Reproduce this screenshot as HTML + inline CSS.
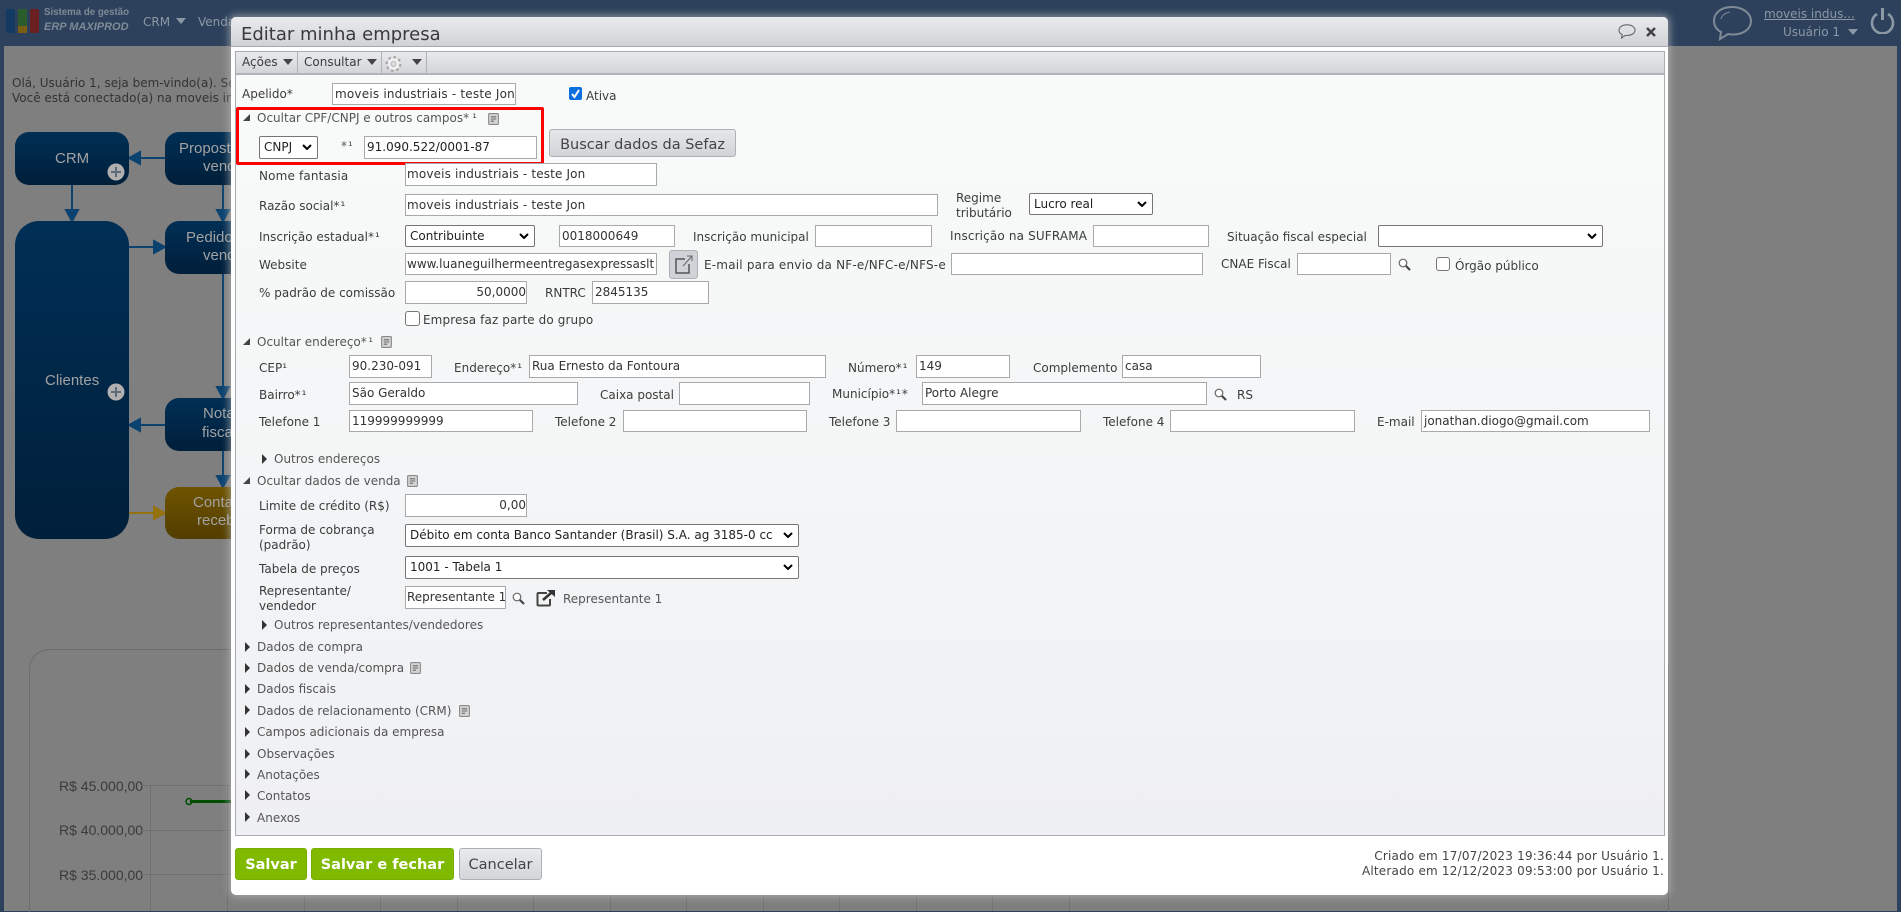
<!DOCTYPE html>
<html lang="pt-BR"><head><meta charset="utf-8"><title>Editar minha empresa</title>
<style>
html,body{margin:0;padding:0;width:1901px;height:912px;overflow:hidden;background:#2d415c}
*{box-sizing:border-box}
body{position:relative;font-family:"DejaVu Sans","Liberation Sans",sans-serif;font-size:12px;color:#3c3c3c}
div,svg{position:absolute}
.t{white-space:nowrap;line-height:16px;height:16px}
.i{background:#fff;border:1px solid #a9a9a9;white-space:nowrap;overflow:hidden;padding-left:2px;color:#333;line-height:20px}
.s{background:#fff;border:1px solid #767676;border-radius:2px;white-space:nowrap;overflow:hidden;padding-left:4px;color:#222;line-height:20px}
.s svg{right:5px;top:7px}
.cb{background:#fff;border:1px solid #767676;border-radius:3px}
.to{width:7px;height:7px;background:#444;clip-path:polygon(100% 0,100% 100%,0 100%)}
.tc{width:5px;height:10px;background:#333;clip-path:polygon(0 0,100% 50%,0 100%)}
.dn{width:0;height:0;border-left:5px solid transparent;border-right:5px solid transparent;border-top:6px solid #444}
.bx{border-radius:14px;background:linear-gradient(#002f55,#001f3a)}
.f{font-family:"Liberation Sans",sans-serif;font-size:15px;color:#a2a2a2;white-space:nowrap;line-height:18px}
.y{font-family:"Liberation Sans",sans-serif;font-size:14px;color:#3a3a3a;white-space:nowrap;line-height:16px}
.btn{border-radius:3px;text-align:center;font-size:14.5px;line-height:32px}
.g{background:#7fb900;color:#fff;font-weight:bold;border:1px solid #76ad00}
.u{letter-spacing:1px}
.w{letter-spacing:.15px}
</style></head><body>
<svg width="0" height="0" style="position:absolute"><defs>
<symbol id="doc" viewBox="0 0 10 11"><rect x=".5" y=".5" width="9" height="10" rx="1" fill="#d4d4d4" stroke="#8a8a8a"/><path d="M2.5 3.5h5M2.5 5.5h5M2.5 7.5h3" stroke="#6a6a6a" fill="none"/></symbol>
<symbol id="sr" viewBox="0 0 13 13"><circle cx="5" cy="5" r="3.8" fill="#fff" stroke="#666" stroke-width="1.2"/><path d="M8 8l4 4" stroke="#444" stroke-width="2.2"/></symbol>
<symbol id="ch" viewBox="0 0 10 6"><path d="M1 1l4 4 4-4" stroke="#000" stroke-width="2" fill="none"/></symbol>
</defs></svg>

<!-- page background -->
<div style="left:4px;top:46px;width:1893px;height:865px;background:#7f7f7f"></div>

<!-- header -->
<div style="left:6px;top:9px;width:9px;height:24px;background:#123a63;border-radius:2px"></div>
<div style="left:18px;top:9px;width:9px;height:17px;background:#2a5c2e"></div>
<div style="left:18px;top:26px;width:9px;height:7px;background:#7a5f12"></div>
<div style="left:30px;top:9px;width:9px;height:24px;background:#6a2020;border-radius:2px"></div>
<div class="t" style="left:44px;top:6px;font:bold 9.7px/14px 'Liberation Sans',sans-serif;color:#7e8a97">Sistema de gestão</div>
<div class="t" style="left:44px;top:19px;font:italic bold 11px/16px 'Liberation Sans',sans-serif;color:#7e8a97">ERP MAXIPROD</div>
<div class="t" style="left:143px;top:14px;color:#8c98a5">CRM</div>
<div class="dn" style="left:176px;top:18px;border-top-color:#8c98a5"></div>
<div class="t" style="left:198px;top:14px;color:#8c98a5">Vendas</div>
<svg style="left:1712px;top:5px" width="41" height="36" viewBox="0 0 41 36"><path d="M20 2C9 2 2 8 2 16c0 5 3 9 7 11l-1 7 8-5c2 .4 3 .5 5 .5 11 0 18-6 18-13.500S31 2 20 2z" fill="none" stroke="#7f8a96" stroke-width="2"/><path d="M9 14c1-4 4-6 9-7" fill="none" stroke="#7f8a96"/></svg>
<div class="t" style="left:1764px;top:6px;color:#8c98a5;text-decoration:underline">moveis indus...</div>
<div class="t" style="left:1783px;top:24px;color:#8c98a5">Usuário 1</div>
<div class="dn" style="left:1848px;top:29px;border-top-color:#8c98a5"></div>
<svg style="left:1870px;top:8px" width="25" height="26" viewBox="0 0 25 26"><path d="M7 6a10.500 10.500 0 1 0 11 0" fill="none" stroke="#8c98a5" stroke-width="2.600"/><path d="M12.500 0v12" stroke="#8c98a5" stroke-width="3"/></svg>

<!-- background content -->
<div class="t" style="left:12px;top:75px;color:#333">Olá, Usuário 1, seja bem-vindo(a). Seu</div>
<div class="t" style="left:12px;top:90px;color:#333">Você está conectado(a) na moveis industriais</div>

<svg style="left:0;top:0" width="240" height="560">
<g stroke="#0b4270" stroke-width="2" fill="#0b4270">
<path d="M165 158H140"/><path d="M129 158l11-6v12z"/>
<path d="M72 185V210"/><path d="M72 221l-6-11h12z"/>
<path d="M129 247H155"/><path d="M165 247l-11-6v12z"/>
<path d="M223 185V210"/><path d="M223 221l-6-11h12z"/>
<path d="M223 274V388"/><path d="M223 398l-6-11h12z"/>
<path d="M165 425H140"/><path d="M129 425l11-6v12z"/>
<path d="M223 451V477"/><path d="M223 487l-6-11h12z"/>
</g>
<g stroke="#96720e" stroke-width="2" fill="#96720e"><path d="M129 513H155"/><path d="M165 513l-11-6v12z"/></g>
</svg>
<div class="bx" style="left:15px;top:132px;width:114px;height:53px"></div>
<div class="f" style="left:55px;top:150px">CRM</div>
<div class="bx" style="left:165px;top:132px;width:80px;height:53px"></div>
<div class="f" style="left:179px;top:140px">Proposta</div>
<div class="f" style="left:203px;top:158px">vendas</div>
<div class="bx" style="left:15px;top:221px;width:114px;height:318px;border-radius:24px"></div>
<div class="f" style="left:45px;top:372px">Clientes</div>
<div class="bx" style="left:165px;top:221px;width:80px;height:53px"></div>
<div class="f" style="left:186px;top:229px">Pedido</div>
<div class="f" style="left:203px;top:247px">vendas</div>
<div class="bx" style="left:165px;top:398px;width:80px;height:53px"></div>
<div class="f" style="left:203px;top:405px">Notas</div>
<div class="f" style="left:202px;top:424px">fiscais</div>
<div class="bx" style="left:165px;top:487px;width:80px;height:52px;background:linear-gradient(#6f5400,#523d00)"></div>
<div class="f" style="left:193px;top:494px">Contas</div>
<div class="f" style="left:197px;top:512px">receber</div>
<svg style="left:107px;top:163px" width="18" height="18"><circle cx="9" cy="9" r="8.500" fill="#b0b0b0"/><path d="M9 4v10M4 9h10" stroke="#5c6a78" stroke-width="2"/></svg>
<svg style="left:107px;top:383px" width="18" height="18"><circle cx="9" cy="9" r="8.500" fill="#b0b0b0"/><path d="M9 4v10M4 9h10" stroke="#5c6a78" stroke-width="2"/></svg>

<!-- chart -->
<div style="left:29px;top:649px;width:1640px;height:300px;border:1px solid #6c6c6c;border-radius:20px"></div>
<div class="y" style="left:59px;top:778px">R$ 45.000,00</div>
<div class="y" style="left:59px;top:822px">R$ 40.000,00</div>
<div class="y" style="left:59px;top:867px">R$ 35.000,00</div>
<svg style="left:0;top:770px" width="1100" height="141">
<g stroke="#707070"><path d="M140 15.500H235M140 60.500H235M140 104.500H235"/><path d="M150.500 15V141M227.500 15V141M304.500 120V141M380.500 120V141M457.500 120V141M533.500 120V141M610.500 120V141M686.500 120V141M763.500 120V141M839.500 120V141M916.500 120V141M992.500 120V141M1069.500 120V141"/></g>
<path d="M190 31.500H235" stroke="#004d00" stroke-width="3"/><circle cx="189" cy="31.500" r="3" fill="none" stroke="#004d00" stroke-width="1.500"/>
</svg>

<!-- modal -->
<div style="left:231px;top:17px;width:1437px;height:878px;background:#fff;border-radius:5px;box-shadow:0 0 8px 2px rgba(190,190,190,.6)"></div>
<div style="left:231px;top:17px;width:1437px;height:30px;background:linear-gradient(#eaebed,#d0d2d5);border-radius:5px 5px 0 0;border-bottom:1px solid #a6aaaf"></div>
<div class="t" style="left:241px;top:23px;font-size:18px;line-height:24px;height:24px;color:#3a3a3a">Editar minha empresa</div>
<svg style="left:1618px;top:24px" width="18" height="15" viewBox="0 0 18 15"><path d="M9 .8C4.500.8 1 3 1 6.200c0 2 1.300 3.500 3.200 4.400L3.500 14l3.800-2.600c.6.100 1.100.100 1.700.100 4.500 0 8-2.200 8-5.300S13.500.8 9 .8z" fill="none" stroke="#666" stroke-width="1.100"/></svg>
<svg style="left:1646px;top:27px" width="10" height="10"><path d="M1 1l8 8M9 1l-8 8" stroke="#444" stroke-width="2.500"/></svg>

<!-- panel -->
<div style="left:235px;top:51px;width:1430px;height:785px;background:linear-gradient(#f9fbfa,#eff0f3);border:1px solid #a8acb2"></div>
<div style="left:236px;top:52px;width:1428px;height:23px;background:linear-gradient(#e9eaec,#d3d5d8);border-bottom:2px solid #b0b4ba"></div>
<div class="t" style="left:242px;top:54px">Ações</div><div class="dn" style="left:283px;top:59px"></div>
<div style="left:297px;top:52px;width:1px;height:21px;background:#aeb2b7"></div>
<div class="t" style="left:304px;top:54px">Consultar</div><div class="dn" style="left:367px;top:59px"></div>
<div style="left:381px;top:52px;width:1px;height:21px;background:#aeb2b7"></div>
<svg style="left:385px;top:55px" width="17" height="18" viewBox="0 0 17 18"><circle cx="8.500" cy="9" r="6.800" fill="none" stroke="#a8a8a8" stroke-width="2.400" stroke-dasharray="2.600 2.700"/><circle cx="8.500" cy="9" r="4.300" fill="none" stroke="#f2f2f2" stroke-width="2.600"/><circle cx="8.500" cy="9" r="2.500" fill="none" stroke="#b5b5b5"/></svg>
<div class="dn" style="left:412px;top:59px"></div>
<div style="left:426px;top:52px;width:1px;height:21px;background:#aeb2b7"></div>

<div class="t" style="left:242px;top:86px">Apelido*</div>
<div class="i" style="left:332px;top:83px;width:184px;height:22px;letter-spacing:.2px">moveis industriais - teste Jon</div>
<svg style="left:569px;top:87px" width="13" height="13"><rect width="13" height="13" rx="2" fill="#0b6fe0"/><path d="M3 7l2.500 3L10 3" stroke="#fff" stroke-width="2" fill="none"/></svg>
<div class="t" style="left:586px;top:88px">Ativa</div>

<div style="left:236px;top:107px;width:308px;height:58px;border:3.500px solid #f00;border-radius:2px"></div>
<div class="to" style="left:243px;top:114px"></div>
<div class="t" style="left:257px;top:110px;color:#555">Ocultar CPF/CNPJ e outros campos<span class="u" style="letter-spacing:3px">*¹</span></div>
<svg style="left:488px;top:113px" width="11" height="12"><use href="#doc"/></svg>
<div class="s" style="left:259px;top:136px;width:59px;height:23px">CNPJ<svg width="10" height="6"><use href="#ch"/></svg></div>
<div class="t" style="left:341px;top:138px;color:#555"><span class="u">*¹</span></div>
<div class="i" style="left:364px;top:136px;width:173px;height:23px;color:#222;line-height:20px">91.090.522/0001-87</div>
<div class="btn" style="left:549px;top:129px;width:187px;height:28px;background:linear-gradient(#e6e7e9,#d2d4d7);border:1px solid #aeb1b5;line-height:31px;color:#444">Buscar dados da Sefaz</div>

<div class="t w" style="left:259px;top:168px">Nome fantasia</div>
<div class="i w" style="left:405px;top:163px;width:252px;height:23px;padding-left:1px">moveis industriais - teste Jon</div>
<div class="t" style="left:259px;top:198px">Razão social<span class="u">*¹</span></div>
<div class="i w" style="left:405px;top:194px;width:533px;height:22px;padding-left:1px">moveis industriais - teste Jon</div>
<div class="t" style="left:956px;top:190px">Regime</div>
<div class="t" style="left:956px;top:205px">tributário</div>
<div class="s" style="left:1029px;top:193px;width:124px;height:22px">Lucro real<svg width="10" height="6"><use href="#ch"/></svg></div>

<div class="t" style="left:259px;top:229px">Inscrição estadual<span class="u">*¹</span></div>
<div class="s" style="left:405px;top:225px;width:130px;height:22px">Contribuinte<svg width="10" height="6"><use href="#ch"/></svg></div>
<div class="i" style="left:559px;top:225px;width:116px;height:22px">0018000649</div>
<div class="t" style="left:693px;top:229px">Inscrição municipal</div>
<div class="i" style="left:815px;top:225px;width:117px;height:22px"></div>
<div class="t w" style="left:950px;top:228px">Inscrição na SUFRAMA</div>
<div class="i" style="left:1093px;top:225px;width:116px;height:22px"></div>
<div class="t" style="left:1227px;top:229px">Situação fiscal especial</div>
<div class="s" style="left:1378px;top:225px;width:225px;height:22px"><svg width="10" height="6"><use href="#ch"/></svg></div>

<div class="t" style="left:259px;top:257px">Website</div>
<div class="i" style="left:405px;top:253px;width:252px;height:22px;padding-left:1px">www.luaneguilhermeentregasexpressaslt</div>
<div style="left:669px;top:250px;width:29px;height:29px;background:#cfd2d6;border:1px solid #aeb1b5;border-radius:3px"></div>
<svg style="left:674px;top:255px" width="20" height="20" viewBox="0 0 20 20"><path d="M11 4H2v14h13V9" fill="none" stroke="#555" stroke-width="1.500"/><path d="M9 11L18 1M13 1h5v5" fill="none" stroke="#666"/></svg>
<div class="t" style="left:704px;top:257px;letter-spacing:.2px">E-mail para envio da NF-e/NFC-e/NFS-e</div>
<div class="i" style="left:951px;top:253px;width:252px;height:22px"></div>
<div class="t" style="left:1221px;top:256px">CNAE Fiscal</div>
<div class="i" style="left:1297px;top:253px;width:94px;height:22px"></div>
<svg style="left:1398px;top:258px" width="13" height="13"><use href="#sr"/></svg>
<div class="cb" style="left:1436px;top:257px;width:14px;height:14px"></div>
<div class="t" style="left:1455px;top:258px">Órgão público</div>

<div class="t" style="left:259px;top:285px">% padrão de comissão</div>
<div class="i" style="left:405px;top:281px;width:122px;height:23px;text-align:right;padding:0">50,0000</div>
<div class="t" style="left:545px;top:285px">RNTRC</div>
<div class="i" style="left:592px;top:281px;width:117px;height:23px">2845135</div>
<div class="cb" style="left:405px;top:311px;width:15px;height:15px"></div>
<div class="t" style="left:423px;top:312px;letter-spacing:.1px">Empresa faz parte do grupo</div>

<div class="to" style="left:243px;top:338px"></div>
<div class="t" style="left:257px;top:334px;color:#555">Ocultar endereço<span class="u" style="letter-spacing:1.5px">*¹</span></div>
<svg style="left:381px;top:336px" width="11" height="12"><use href="#doc"/></svg>

<div class="t" style="left:259px;top:360px">CEP¹</div>
<div class="i" style="left:349px;top:355px;width:83px;height:23px">90.230-091</div>
<div class="t" style="left:454px;top:360px">Endereço<span class="u">*¹</span></div>
<div class="i" style="left:529px;top:355px;width:297px;height:23px">Rua Ernesto da Fontoura</div>
<div class="t" style="left:848px;top:360px">Número<span class="u">*¹</span></div>
<div class="i" style="left:916px;top:355px;width:94px;height:23px">149</div>
<div class="t" style="left:1033px;top:360px">Complemento</div>
<div class="i" style="left:1122px;top:355px;width:139px;height:23px">casa</div>

<div class="t" style="left:259px;top:387px">Bairro<span class="u">*¹</span></div>
<div class="i" style="left:349px;top:382px;width:229px;height:23px">São Geraldo</div>
<div class="t" style="left:600px;top:387px">Caixa postal</div>
<div class="i" style="left:679px;top:382px;width:131px;height:23px"></div>
<div class="t" style="left:832px;top:386px">Município<span class="u">*¹*</span></div>
<div class="i" style="left:922px;top:382px;width:285px;height:23px">Porto Alegre</div>
<svg style="left:1214px;top:388px" width="13" height="13"><use href="#sr"/></svg>
<div class="t" style="left:1237px;top:387px">RS</div>

<div class="t" style="left:259px;top:414px">Telefone 1</div>
<div class="i" style="left:349px;top:410px;width:184px;height:22px">119999999999</div>
<div class="t" style="left:555px;top:414px">Telefone 2</div>
<div class="i" style="left:623px;top:410px;width:184px;height:22px"></div>
<div class="t" style="left:829px;top:414px">Telefone 3</div>
<div class="i" style="left:896px;top:410px;width:185px;height:22px"></div>
<div class="t" style="left:1103px;top:414px">Telefone 4</div>
<div class="i" style="left:1170px;top:410px;width:185px;height:22px"></div>
<div class="t" style="left:1377px;top:414px">E-mail</div>
<div class="i" style="left:1421px;top:410px;width:229px;height:22px">jonathan.diogo@gmail.com</div>

<div class="tc" style="left:262px;top:454px"></div>
<div class="t" style="left:274px;top:451px;color:#555">Outros endereços</div>
<div class="to" style="left:243px;top:477px"></div>
<div class="t" style="left:257px;top:473px;color:#555">Ocultar dados de venda</div>
<svg style="left:407px;top:475px" width="11" height="12"><use href="#doc"/></svg>

<div class="t" style="left:259px;top:498px">Limite de crédito (R$)</div>
<div class="i" style="left:405px;top:494px;width:122px;height:23px;text-align:right;padding:0">0,00</div>
<div class="t" style="left:259px;top:522px">Forma de cobrança</div>
<div class="t" style="left:259px;top:537px">(padrão)</div>
<div class="s" style="left:405px;top:524px;width:394px;height:23px;line-height:21px"><span style="display:block;width:362px;overflow:hidden">Débito em conta Banco Santander (Brasil) S.A. ag 3185-0 cc 1234</span><svg width="10" height="6"><use href="#ch"/></svg></div>
<div class="t" style="left:259px;top:561px">Tabela de preços</div>
<div class="s" style="left:405px;top:556px;width:394px;height:23px;line-height:21px">1001 - Tabela 1<svg width="10" height="6"><use href="#ch"/></svg></div>
<div class="t" style="left:259px;top:583px">Representante/</div>
<div class="t" style="left:259px;top:598px">vendedor</div>
<div class="i" style="left:405px;top:586px;width:101px;height:23px;line-height:20px;padding-left:1px">Representante 1</div>
<svg style="left:512px;top:592px" width="13" height="13"><use href="#sr"/></svg>
<svg style="left:536px;top:590px" width="19" height="17" viewBox="0 0 19 17"><path d="M11 3H2.500a1 1 0 0 0-1 1v10.500a1 1 0 0 0 1 1H13a1 1 0 0 0 1-1V9" fill="none" stroke="#444" stroke-width="2"/><path d="M7 10L15 3" stroke="#333" stroke-width="2.500"/><path d="M11 0h8v7z" fill="#333"/></svg>
<div class="t" style="left:563px;top:591px;color:#555">Representante 1</div>
<div class="tc" style="left:262px;top:620px"></div>
<div class="t" style="left:274px;top:617px;color:#555">Outros representantes/vendedores</div>

<div class="tc" style="left:245px;top:642px"></div><div class="t" style="left:257px;top:639px;color:#555">Dados de compra</div>
<div class="tc" style="left:245px;top:663px"></div><div class="t" style="left:257px;top:660px;color:#555">Dados de venda/compra</div>
<svg style="left:410px;top:662px" width="11" height="12"><use href="#doc"/></svg>
<div class="tc" style="left:245px;top:684px"></div><div class="t" style="left:257px;top:681px;color:#555">Dados fiscais</div>
<div class="tc" style="left:245px;top:705px"></div><div class="t" style="left:257px;top:703px;color:#555">Dados de relacionamento (CRM)</div>
<svg style="left:459px;top:705px" width="11" height="12"><use href="#doc"/></svg>
<div class="tc" style="left:245px;top:727px"></div><div class="t" style="left:257px;top:724px;color:#555">Campos adicionais da empresa</div>
<div class="tc" style="left:245px;top:749px"></div><div class="t" style="left:257px;top:746px;color:#555">Observações</div>
<div class="tc" style="left:245px;top:769px"></div><div class="t" style="left:257px;top:767px;color:#555">Anotações</div>
<div class="tc" style="left:245px;top:790px"></div><div class="t" style="left:257px;top:788px;color:#555">Contatos</div>
<div class="tc" style="left:245px;top:812px"></div><div class="t" style="left:257px;top:810px;color:#555">Anexos</div>

<div class="btn g" style="left:235px;top:848px;width:72px;height:32px">Salvar</div>
<div class="btn g" style="left:311px;top:848px;width:143px;height:32px">Salvar e fechar</div>
<div class="btn" style="left:459px;top:848px;width:83px;height:32px;background:linear-gradient(#e9eaec,#d3d5d8);border:1px solid #aeb1b5;color:#444">Cancelar</div>
<div class="t" style="right:237px;top:848px;color:#444;letter-spacing:.2px">Criado em 17/07/2023 19:36:44 por Usuário 1.</div>
<div class="t" style="right:237px;top:863px;color:#444;letter-spacing:.2px">Alterado em 12/12/2023 09:53:00 por Usuário 1.</div>
</body></html>
